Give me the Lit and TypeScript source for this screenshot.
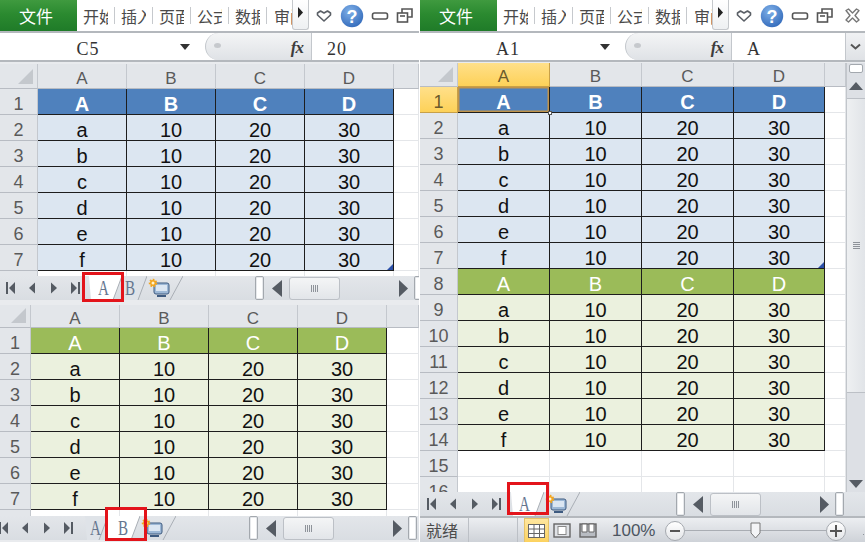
import { LitElement, html, css, svg, nothing } from "lit";
import { customElement, property } from "lit/decorators.js";

type RowKind = "bh" | "b" | "gh" | "g" | "e";
interface Row { n: string; kind: RowKind; vals: string[]; corner?: boolean; }
interface TabCfg { label: string; w: number; pad: number; active?: boolean; }
interface PaneCfg {
  height: number; name?: string; value?: string; gap?: number; topPad?: number;
  rowHdr: number; cols: number[]; hdrH: number; rows: Row[]; gridH: number;
  navShift: number; navW: number; tabs: TabCfg[]; iconW: number; tabsW: number;
  red: { x: number; y: number; w: number; h: number };
  selected?: boolean; full?: boolean;
}

const vals = (a: string): string[] => [a, "10", "20", "30"];
const block = (start: number, head: RowKind, body: RowKind, corner: boolean): Row[] => {
  const out: Row[] = [{ n: String(start), kind: head, vals: ["A", "B", "C", "D"] }];
  ["a", "b", "c", "d", "e", "f"].forEach((l, i) =>
    out.push({ n: String(start + i + 1), kind: body, vals: vals(l), corner: corner && i === 5 })
  );
  return out;
};
const empty = (n: string): Row => ({ n, kind: "e", vals: ["", "", "", ""] });

const PANES: Record<string, PaneCfg> = {
  topLeft: {
    height: 301, name: "C5", value: "20", gap: 2, rowHdr: 38, cols: [89, 89, 89, 89], hdrH: 25,
    rows: [...block(1, "bh", "b", true), empty("")], gridH: 212,
    navShift: 0, navW: 88,
    tabs: [{ label: "A", w: 34, pad: 2, active: true }, { label: "B", w: 25, pad: 9 }], iconW: 36, tabsW: 167,
    red: { x: -6, y: -4, w: 42, h: 30 },
  },
  bottomLeft: {
    height: 241, topPad: 4, rowHdr: 31, cols: [89, 89, 89, 89], hdrH: 23,
    rows: [...block(1, "gh", "g", false), empty("")], gridH: 211,
    navShift: -7, navW: 91,
    tabs: [{ label: "A", w: 24, pad: 0 }, { label: "B", w: 32, pad: 2, active: true }], iconW: 36, tabsW: 165,
    red: { x: -3, y: -9, w: 42, h: 34 },
  },
  right: {
    height: 542, name: "A1", value: "A", gap: 1, rowHdr: 38, cols: [92, 92, 92, 91], hdrH: 24,
    rows: [...block(1, "bh", "b", true), ...block(8, "gh", "g", false), empty("15"), empty("16")], gridH: 429,
    navShift: 1, navW: 89,
    tabs: [{ label: "A", w: 34, pad: 4, active: true }], iconW: 36, tabsW: 166,
    red: { x: -3, y: -10, w: 42, h: 33 }, selected: true, full: true,
  },
};

const tri = (d: string) => html`<svg width="11" height="14" viewBox="0 0 11 14"><path d=${d} fill="#555b63"/></svg>`;

@customElement("excel-pane")
class ExcelPane extends LitElement {
  @property({ attribute: false }) cfg!: PaneCfg;

  static styles = css`
    :host { display: block; font-family: "Liberation Sans", Arial, sans-serif; }
    .pane { display: flex; flex-direction: column; background: #e9ebee; }
    .ribbon { display: flex; height: 31px; background: #fff; flex: none; overflow: visible; }
    .file { width: 77px; flex: none; background: linear-gradient(#3f9a3f, #2b8a30 45%, #1f7b28); color: #fff;
      font: 17px "Noto Sans CJK SC", sans-serif; display: flex; align-items: center; justify-content: center; padding-right: 5px; box-sizing: border-box; }
    .rtab { width: 38px; box-sizing: border-box; padding-left: 6px; flex: none; height: 31px; display: flex; align-items: center; }
    .rtab span { display: block; width: 26px; overflow: hidden; white-space: nowrap; font: 16px/20px "Noto Sans CJK SC", sans-serif; color: #4a4a4a; }
    .rtab i { display: block; width: 1px; height: 17px; background: #c6c9cd; margin-left: 6px; flex: none; }
    .rtab.last { width: 25px; padding-left: 7px; }
    .rtab.last span { width: 18px; }
    .more { width: 17px; height: 30px; flex: none; box-sizing: border-box; border: 1px solid #c5c8cc; border-top: 0; border-radius: 0 0 3px 3px;
      background: linear-gradient(#fff, #eef0f2); display: flex; justify-content: center; padding-top: 7px; }
    .win { display: flex; align-items: center; flex: none; height: 31px; padding-left: 7px; }
    .win svg { display: block; flex: none; }
    .namebar { display: flex; height: 27px; flex: none; margin-top: 2px; background: #fff; border-bottom: 2px solid #b4b8bd; box-shadow: 0 -2px 0 #b4b8bd; }
    .namebox { width: 205px; flex: none; display: flex; align-items: center; box-sizing: border-box; }
    .namebox b { width: 176px; text-align: center; font: 18px "Liberation Serif", serif; letter-spacing: 1px; color: #333; padding-top: 5px; }
    .drop { width: 0; height: 0; border: 5px solid transparent; border-top: 6px solid #333; border-bottom: 0; margin-left: 4px; }
    .fxwrap { width: 107px; flex: none; border: 1px solid #c3c7cc; border-width: 0 1px 0 1px; border-radius: 14px 0 0 14px; box-sizing: border-box;
      background: linear-gradient(#f4f5f6, #dfe2e6); display: flex; align-items: center; justify-content: space-between; padding: 0 8px 0 8px; }
    .dot { width: 7px; height: 5px; border-radius: 50%; background: #c6c9cd; margin-bottom: 3px; }
    .fx { font: italic bold 17px "Liberation Serif", serif; color: #3d3d3d; letter-spacing: -1px; padding-top: 3px; }
    .value { flex: 1; padding-left: 15px; font: 18px/32px "Liberation Serif", serif; letter-spacing: 1px; color: #333; }
    .expander { width: 19px; flex: none; background: linear-gradient(#f0f1f3, #dfe2e6); border-left: 1px solid #c3c7cc; display: flex; align-items: center; justify-content: center; }
    .gridrow { display: flex; flex: none; overflow: hidden; }
    .grid { display: grid; flex: 1; min-width: 0; background: #fff; grid-auto-rows: 26px; align-content: start; overflow: hidden; }
    .c { box-sizing: border-box; display: flex; align-items: center; justify-content: center; min-width: 0; font-size: 20px; color: #111; position: relative; padding-top: 5px; }
    .hd { background: #e3e6ea; color: #5a5a5a; font-size: 17px; border-right: 1px solid #c4c8ce; border-bottom: 1px solid #b8bcc3; }
    .rn { font-size: 18px; }
    .corner::after { content: ""; position: absolute; right: 4px; bottom: 4px; width: 15px; height: 15px; background: #c4c8cd; clip-path: polygon(100% 0, 100% 100%, 0 100%); }
    .sel { background: linear-gradient(#ffe08a, #fdd158); color: #6b5a2c; border-right-color: #c8a047; border-bottom-color: #c8a047; }
    .x { background: #fff; border-right: 1px solid #e4e6e9; border-bottom: 1px solid #e4e6e9; }
    .bc { border-right: 1px solid #1d1d1d; border-bottom: 1px solid #1d1d1d; }
    .bh { background: #4f81bd; color: #fff; font-weight: bold; }
    .b { background: #dce6f1; }
    .gh { background: #9bbb59; color: #fff; }
    .g { background: #ebf1de; }
    .active-cell { box-shadow: inset 0 0 0 1.5px #c0934a; }
    .active-cell::after { content: ""; position: absolute; right: -3px; bottom: -3px; width: 4px; height: 4px; background: #fff; border: 1px solid #555; z-index: 2; box-sizing: border-box; }
    .resize::after { content: ""; position: absolute; right: 0; bottom: 0; width: 6px; height: 6px; background: #2a4fa8; clip-path: polygon(100% 0, 100% 100%, 0 100%); }
    .tabbar { display: flex; height: 24px; flex: none; background: linear-gradient(#e3e6ea, #d9dde2); position: relative; z-index: 3; box-sizing: border-box; }
    .nav { display: flex; flex: none; align-items: center; box-sizing: border-box; }
    .nav span { width: 21.5px; flex: none; display: flex; justify-content: center; }
    .tabs { display: flex; flex: none; position: relative; height: 24px; }
    .tab { position: relative; height: 24px; flex: none; display: flex; align-items: center; justify-content: center; box-sizing: border-box; }
    .tab svg.shape { position: absolute; inset: 0; }
    .tab em { position: relative; display: block; font: normal 21px/24px "Liberation Serif", serif; color: #66778f; transform: scaleX(.72); }
    .redbox { position: absolute; border: 3px solid #e3141b; box-sizing: border-box; z-index: 5; pointer-events: none; }
    .split { width: 9px; height: 24px; flex: none; box-sizing: border-box; border: 1px solid #a3a8ae; background: #fff; box-shadow: inset 0 0 0 1px #e7e9ec; border-radius: 2px; }
    .hs { display: flex; align-items: center; width: 150px; flex: none; height: 24px; }
    .hs .l { width: 25px; flex: none; display: flex; justify-content: center; }
    .thumb { width: 51px; height: 23px; flex: none; box-sizing: border-box; border: 1px solid #bcc0c6; border-radius: 3px; background: linear-gradient(#f4f5f6, #e2e5e9); display: flex; align-items: center; justify-content: center; }
    .thumb i, .vgrip { display: block; width: 7px; height: 7px; background: repeating-linear-gradient(90deg, #8e939a 0 1px, transparent 1px 2px); }
    .hs .track { flex: 1; }
    .hs .r { width: 15px; flex: none; display: flex; justify-content: flex-start; }
    .vbar { width: 19px; flex: none; display: flex; flex-direction: column; background: #dde0e5; border-left: 1px solid #c2c6cb; box-sizing: border-box; }
    .vsplit { height: 9px; margin: 1px 2px 0; flex: none; border: 1px solid #a3a8ae; background: #fff; box-sizing: border-box; border-radius: 2px; }
    .vbtn { height: 25px; flex: none; display: flex; align-items: center; justify-content: center; }
    .vthumb { height: 295px; flex: none; box-sizing: border-box; border: 1px solid #bcc0c6; border-width: 1px 0 1px 0; background: linear-gradient(90deg, #eef0f2, #e1e4e8); display: flex; align-items: center; justify-content: center; }
    .vgrip { background: repeating-linear-gradient(0deg, #8e939a 0 1px, transparent 1px 2px); }
    .vtrack { flex: 1; }
    .status { display: flex; align-items: center; flex: none; height: 25px; margin-top: 2px; background: linear-gradient(#eceef1, #cdd1d7); box-shadow: 0 -2px 0 #b4b8bd; color: #4b4b4b; }
    .ready { font: 16px "Noto Sans CJK SC", sans-serif; width: 49px; padding-left: 6px; box-sizing: border-box; flex: none; border-right: 1px solid #bcc0c6; height: 25px; line-height: 24px; }
    .sbgap { width: 49px; flex: none; height: 25px; border-right: 1px solid #bcc0c6; box-sizing: border-box; margin-right: 6px; }
    .vbtnact { width: 25px; height: 25px; flex: none; background: linear-gradient(#ffe7a0, #fcd25f); display: flex; align-items: center; justify-content: center; border: 1px solid #e6c36a; box-sizing: border-box; }
    .vico { width: 26px; flex: none; display: flex; align-items: center; justify-content: center; }
    .zoom { font-size: 17px; width: 53px; margin-left: 11px; flex: none; color: #4c5561; }
    .slider { display: flex; align-items: center; width: 181px; flex: none; }
    .circ { width: 20px; height: 20px; border-radius: 50%; flex: none; box-sizing: border-box; border: 1px solid #a5a9af; background: linear-gradient(#fff, #e3e5e8); display: flex; align-items: center; justify-content: center; }
    .line { flex: 1; height: 1px; background: #a9adb3; display: flex; align-items: center; }
    .knob { margin-left: 65px; flex: none; }
    .grip { margin-left: 17px; flex: none; }
  `;

  private ribbon() {
    const labels = ["开始", "插入", "页面", "公式", "数据"];
    return html`<div class="ribbon">
      <div class="file">文件</div>
      ${labels.map((l) => html`<div class="rtab"><span>${l}</span><i></i></div>`)}
      <div class="rtab last"><span>审阅</span></div>
      <div class="more"><svg width="7" height="11" viewBox="0 0 7 11"><path d="M1 0l5 5.5L1 11z" fill="#222"/></svg></div>
      <div class="win">
        <svg width="16" height="14" viewBox="0 0 16 14"><path d="M1.5 4L4.5 2 8 4l3.500-2 3 2v2L8 12 1.500 6z" fill="#fff" stroke="#5a5f66" stroke-width="1.6" stroke-linejoin="round"/></svg>
        <svg style="margin-left:8px" width="24" height="24" viewBox="0 0 24 24">
          <defs><radialGradient id="h" cx=".4" cy=".3" r=".8"><stop offset="0" stop-color="#7fb0e8"/><stop offset="1" stop-color="#2e66b8"/></radialGradient></defs>
          <circle cx="12" cy="12" r="11.2" fill="url(#h)"/>
          <text x="12" y="18.5" text-anchor="middle" font-family="Liberation Sans" font-weight="bold" font-size="18" fill="#fff">?</text>
        </svg>
        <svg style="margin-left:7px" width="18" height="10" viewBox="0 0 18 10"><rect x="1.5" y="2" width="15" height="6" rx="2" fill="#fff" stroke="#555" stroke-width="1.6"/></svg>
        <svg style="margin-left:7px" width="18" height="17" viewBox="0 0 18 17"><path d="M6 6V2h10v8h-4" fill="none" stroke="#555" stroke-width="1.6"/><rect x="1.5" y="6" width="10" height="9" fill="#fff" stroke="#555" stroke-width="1.6"/><path d="M4 9h5" stroke="#555" stroke-width="1.6"/></svg>
        <svg style="margin-left:10px" width="17" height="15" viewBox="0 0 17 15"><path d="M2 2.500L4.500 1l4 4 4-4L15 2.500 11 7.500l4 4.500-2.500 2-4-4-4 4L2 12l4-4.500z" fill="#fff" stroke="#777" stroke-width="1.4" stroke-linejoin="round"/></svg>
      </div>
    </div>`;
  }

  private namebar(c: PaneCfg) {
    return html`<div class="namebar">
      <div class="namebox"><b>${c.name}</b><span class="drop"></span></div>
      <div class="fxwrap"><span class="dot"></span><span class="fx">fx</span></div>
      <div class="value">${c.value}</div>
      ${c.full ? html`<div class="expander"><svg width="11" height="8" viewBox="0 0 11 8"><path d="M1 1.500l4.500 4 4.500-4" fill="none" stroke="#555" stroke-width="2"/></svg></div>` : nothing}
    </div>`;
  }

  private grid(c: PaneCfg) {
    const letters = ["A", "B", "C", "D"];
    const tpl = `${c.rowHdr}px ${c.cols.map((w) => w + "px").join(" ")} 1fr`;
    const rows = `${c.hdrH}px`;
    return html`<div class="grid" style="grid-template-columns:${tpl};grid-template-rows:${rows}">
      <div class="c hd corner"></div>
      ${letters.map((l, i) => html`<div class="c hd ${c.selected && i === 0 ? "sel" : ""}">${l}</div>`)}
      <div class="c hd"></div>
      ${c.rows.map((r, ri) => html`
        <div class="c hd rn ${c.selected && ri === 0 ? "sel" : ""}">${r.n}</div>
        ${r.vals.map((v, i) => html`<div class="c ${r.kind === "e" ? "x" : "bc " + r.kind}
            ${c.selected && ri === 0 && i === 0 ? "active-cell" : ""}
            ${r.corner && i === 3 ? "resize" : ""}">${v}</div>`)}
        <div class="c x"></div>`)}
    </div>`;
  }

  private tabShape(w: number, active: boolean, left: boolean) {
    const fill = active ? "#fff" : "#dfe3e8";
    return html`<svg class="shape" width=${w} height="24" viewBox="0 0 ${w} 24">
      ${svg`<polygon points="${left ? 1 : 0},0 ${w},0 ${w - 9},24 ${left ? 3 : 0},24" fill=${fill}/>
      <path d="M${w} 0 L${w - 9} 24" stroke="#a9aeb5" stroke-width="1" fill="none"/>`}
    </svg>`;
  }

  private tabbar(c: PaneCfg) {
    const I = {
      first: tri("M1 1h2v12H1zM10 1v12L4 7z"),
      prev: tri("M8 1.500v11L2 7z"),
      next: tri("M3 1.500v11L9 7z"),
      last: tri("M1 1v12l6-6zM8 1h2v12H8z"),
    };
    const bigL = html`<svg width="10" height="17" viewBox="0 0 10 17"><path d="M10 0v17L0 8.500z" fill="#555b63"/></svg>`;
    const bigR = html`<svg width="9" height="17" viewBox="0 0 9 17"><path d="M0 0v17l9-8.500z" fill="#555b63"/></svg>`;
    const active = c.tabs.findIndex((t) => t.active);
    const ax = c.tabs.slice(0, active).reduce((s, t) => s + t.w, 0);
    const iw = c.iconW;
    return html`<div class="tabbar">
      <div class="nav" style="margin-left:${c.navShift}px;width:${c.navW}px">
        <span>${I.first}</span><span>${I.prev}</span><span>${I.next}</span><span>${I.last}</span>
      </div>
      <div class="tabs" style="width:${c.tabsW}px">
        ${c.tabs.map((t, i) => html`<div class="tab" style="width:${t.w}px;padding-right:${t.pad}px">
          ${this.tabShape(t.w, !!t.active, i === 0)}<em>${t.label}</em></div>`)}
        <div class="tab" style="width:${iw}px">
          <svg class="shape" width=${iw} height="24" viewBox="0 0 ${iw} 24">
            <path d="M${iw} 0 L${iw - 13} 24" stroke="#a9aeb5" fill="none"/>
            <rect x="7" y="7" width="15" height="11" rx="2" fill="#9db8d6" stroke="#3d5a80"/>
            <rect x="9" y="9" width="11" height="6" fill="#dbe6f2"/>
            <path d="M10 20h9" stroke="#3d5a80" stroke-width="2"/>
            <circle cx="6" cy="7" r="3" fill="#f3a51e" stroke="#f3a51e" stroke-width="2.500" stroke-dasharray="1.500 1.200"/>
            <circle cx="6" cy="7" r="1.500" fill="#fff3cf"/>
          </svg>
        </div>
        <div class="redbox" style="left:${ax + c.red.x}px;top:${c.red.y}px;width:${c.red.w}px;height:${c.red.h}px"></div>
      </div>
      <div class="split"></div>
      <div class="hs">
        <span class="l">${bigL}</span>
        <div class="thumb"><i></i></div>
        <span class="track"></span>
        <span class="r">${bigR}</span>
      </div>
      <div class="split"></div>
    </div>`;
  }

  private status() {
    return html`<div class="status">
      <div class="ready">就绪</div>
      <div class="sbgap"></div>
      <div class="vbtnact"><svg width="17" height="14" viewBox="0 0 17 14"><rect x=".5" y=".5" width="16" height="13" fill="#fff" stroke="#666"/><path d="M.5 5h16M.5 9.500h16M6 .5v13M11.500 .5v13" stroke="#666"/></svg></div>
      <div class="vico"><svg width="18" height="15" viewBox="0 0 18 15"><rect x="1" y="1" width="16" height="13" fill="#dfe2e6" stroke="#666" stroke-width="1.400"/><rect x="5" y="3.500" width="8" height="8" fill="#fff" stroke="#888"/></svg></div>
      <div class="vico"><svg width="18" height="15" viewBox="0 0 18 15"><rect x="1" y="1" width="16" height="13" fill="#b8bcc2" stroke="#666" stroke-width="1.400"/><path d="M3 1v8h5V1zM10 1v8h5V1z" fill="#fff" stroke="#666"/></svg></div>
      <div class="zoom">100%</div>
      <div class="slider">
        <div class="circ"><svg width="10" height="10" viewBox="0 0 10 10"><path d="M0 5h10" stroke="#555" stroke-width="2"/></svg></div>
        <div class="line"><svg class="knob" width="11" height="17" viewBox="0 0 11 17"><path d="M1 1h9v10l-4.500 5L1 11z" fill="#f3f4f6" stroke="#777"/></svg></div>
        <div class="circ"><svg width="12" height="12" viewBox="0 0 12 12"><path d="M0 6h12M6 0v12" stroke="#555" stroke-width="2"/></svg></div>
      </div>
      <svg class="grip" width="8" height="8" viewBox="0 0 8 8"><path d="M6 1h1v1H6zM3 4h1v1H3zM6 4h1v1H6zM0 7h1v1H0zM3 7h1v1H3zM6 7h1v1H6z" fill="#8e939a"/></svg>
    </div>`;
  }

  render() {
    const c = this.cfg;
    return html`<div class="pane" style="height:${c.height}px;padding-top:${c.topPad ?? 0}px;box-sizing:border-box">
      ${c.name ? html`${this.ribbon()}${this.namebar(c)}<div style="height:${c.gap}px;flex:none"></div>` : nothing}
      <div class="gridrow" style="height:${c.gridH}px">
        ${this.grid(c)}
        ${c.full
          ? html`<div class="vbar">
              <div class="vsplit"></div>
              <div class="vbtn"><svg width="14" height="8" viewBox="0 0 14 8"><path d="M7 0l7 8H0z" fill="#555b63"/></svg></div>
              <div class="vthumb"><i class="vgrip"></i></div>
              <div class="vtrack"></div>
              <div class="vbtn" style="height:16px"><svg width="14" height="8" viewBox="0 0 14 8"><path d="M0 0h14L7 8z" fill="#555b63"/></svg></div>
            </div>`
          : nothing}
      </div>
      ${this.tabbar(c)}
      ${c.full ? this.status() : nothing}
    </div>`;
  }
}

@customElement("app-root")
class AppRoot extends LitElement {
  static styles = css`
    :host { display: block; width: 865px; height: 542px; overflow: hidden; background: #fff; }
    .page { display: flex; gap: 1px; height: 542px; }
    .left { width: 419px; flex: none; overflow: hidden; display: flex; flex-direction: column; height: 542px; }
    .right { flex: 1; min-width: 0; overflow: hidden; }
  `;
  render() {
    return html`<div class="page">
      <div class="left">
        <excel-pane .cfg=${PANES.topLeft}></excel-pane>
        <excel-pane .cfg=${PANES.bottomLeft}></excel-pane>
      </div>
      <div class="right"><excel-pane .cfg=${PANES.right}></excel-pane></div>
    </div>`;
  }
}
